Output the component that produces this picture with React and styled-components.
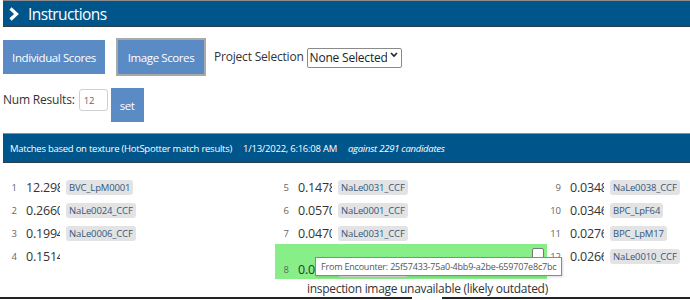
import React from "react";
import styled, { createGlobalStyle } from "styled-components";

const GlobalStyle = createGlobalStyle`
  html, body { margin: 0; padding: 0; background: #fff; overflow: hidden; }
  body { font-family: "Open Sans", "Noto Sans", sans-serif; color: #333; }
  * { box-sizing: border-box; }
`;

const Page = styled.div`
  width: 830px;
  padding: 0 0 0 3px;
  position: relative;
`;

const Bar = styled.div`
  display: flex;
  align-items: center;
  background: #00558a;
  border-top: 1px solid #8c8c8c;
  border-bottom: 1px solid #2a3d4d;
  color: #fff;
  margin-top: ${(p) => p.$top || 0}px;
  height: ${(p) => p.$h}px;
  padding-left: ${(p) => p.$pl}px;
  gap: ${(p) => p.$gap || 0}px;
`;

const Title = styled.span`
  font-size: 15.5px;
  letter-spacing: -0.6px;
`;

const Toolbar = styled.div`
  display: flex;
  align-items: center;
  height: 38px;
  margin-top: 11px;
`;

const Button = styled.button`
  font-family: inherit;
  font-size: 11.5px;
  letter-spacing: -0.4px;
  color: #fff;
  background: #5b8bc5;
  border: ${(p) => (p.$active ? "2px solid #a9a9a9" : "none")};
  height: ${(p) => (p.$active ? 38 : 34)}px;
  width: ${(p) => p.$w}px;
  padding: 0;
  margin-right: ${(p) => p.$mr || 0}px;
  cursor: pointer;
`;

const Label = styled.span`
  font-size: 12px;
  letter-spacing: -0.2px;
  color: #333;
  margin-right: ${(p) => p.$mr || 0}px;
  margin-top: ${(p) => p.$mt || 0}px;
  line-height: 20px;
`;

const SelectWrap = styled.div`
  position: relative;
  margin-top: -4px;
  height: 20px;
`;

const Select = styled.select`
  appearance: none;
  -webkit-appearance: none;
  font-family: inherit;
  font-size: 12px;
  letter-spacing: -0.2px;
  color: #222;
  height: 20px;
  width: 95px;
  padding: 0 14px 0 2px;
  border: 1px solid #8a8a8a;
  border-radius: 2px;
  background: #fff;
  outline: none;
`;

const Arrow = styled.svg`
  position: absolute;
  right: 4px;
  top: 7px;
  pointer-events: none;
`;

const NumRow = styled.div`
  display: flex;
  align-items: flex-start;
  height: 34px;
  margin-top: 12px;
`;

const NumInput = styled.input`
  font-family: inherit;
  font-size: 9.5px;
  color: #666;
  width: 29px;
  height: 22px;
  margin: 1px 3px 0 4px;
  padding: 0 4px;
  border: 1px solid #d0d0d0;
  border-radius: 3px;
  outline: none;
`;

const Grid = styled.div`
  display: grid;
  grid-template-columns: repeat(3, 272px);
  margin-top: 13px;
`;

const Column = styled.div`
  display: flex;
  flex-direction: column;
`;

const Cell = styled.div`
  position: relative;
  display: flex;
  align-items: ${(p) => (p.$sel ? "flex-end" : "center")};
  height: ${(p) => (p.$sel ? 35 : 23)}px;
  margin-top: ${(p) => (p.$sel ? -1 : 0)}px;
  background: ${(p) => (p.$sel ? "#88ee88" : "transparent")};
  padding-bottom: ${(p) => (p.$sel ? 1 : 0)}px;
`;

const Inner = styled.div`
  display: flex;
  align-items: center;
  height: 18px;
`;

const Rank = styled.span`
  width: 14px;
  text-align: right;
  font-size: 9.5px;
  color: #666;
`;

const Score = styled.span`
  width: 34px;
  margin-left: 9px;
  overflow: hidden;
  white-space: nowrap;
  font-size: 12.5px;
  letter-spacing: -0.2px;
  color: #333;
`;

const Tag = styled.span`
  margin-left: 6px;
  background: #e3e3e3;
  border-radius: 3px;
  padding: 0 3px;
  font-size: 9.5px;
  letter-spacing: -0.15px;
  line-height: 15px;
  color: #33577e;
`;

const Check = styled.span`
  position: absolute;
  top: 4px;
  right: 3px;
  width: 12px;
  height: 12px;
  background: #fff;
  border: 1px solid #777;
  border-radius: 2px;
`;

const Note = styled.div`
  margin: 2px 0 0 32px;
  font-size: 12px;
  letter-spacing: -0.3px;
  line-height: 16px;
  height: 16px;
  color: #333;
  white-space: nowrap;
`;

const Tooltip = styled.div`
  position: absolute;
  left: 315px;
  top: 257px;
  height: 19px;
  padding: 0 5px;
  display: flex;
  align-items: center;
  background: #fff;
  border: 1px solid #8a8a8a;
  font-size: 9px;
  letter-spacing: -0.2px;
  color: #555;
  white-space: nowrap;
  box-shadow: 1px 1px 2px rgba(0, 0, 0, 0.15);
`;

const Rule = styled.div`
  display: flex;
  gap: 30px;
  margin-left: -3px;
  width: 693px;
  height: 2px;
`;

const RuleSeg = styled.div`
  height: 2px;
  background: #222;
  width: ${(p) => (p.$w ? `${p.$w}px` : "auto")};
  flex: ${(p) => (p.$w ? "none" : "1")};
`;

const Italic = styled.span`
  font-style: italic;
`;

const Small = styled.span`
  font-size: 9.5px;
  letter-spacing: -0.25px;
`;

const cols = [
  [
    ["1", "12.2987", "BVC_LpM0001"],
    ["2", "0.2660", "NaLe0024_CCF"],
    ["3", "0.1994", "NaLe0006_CCF"],
    ["4", "0.1514", null],
  ],
  [
    ["5", "0.1478", "NaLe0031_CCF"],
    ["6", "0.0570", "NaLe0001_CCF"],
    ["7", "0.0470", "NaLe0031_CCF"],
    ["8", "0.0455", "NaLe0031_CCF", true],
  ],
  [
    ["9", "0.0348", "NaLe0038_CCF"],
    ["10", "0.0346", "BPC_LpF64"],
    ["11", "0.0276", "BPC_LpM17"],
    ["12", "0.0266", "NaLe0010_CCF"],
  ],
];

function Match({ rank, score, tag, sel }) {
  const content = (
    <>
      <Rank>{rank}</Rank>
      <Score>{score}</Score>
      {tag && <Tag>{tag}</Tag>}
    </>
  );
  if (sel) {
    return (
      <Cell $sel>
        <Check />
        <Inner>{content}</Inner>
      </Cell>
    );
  }
  return <Cell>{content}</Cell>;
}

export default function App() {
  return (
    <Page>
      <GlobalStyle />
      <Bar $h={27} $pl={5} $gap={8}>
        <svg width="12" height="14" viewBox="0 0 12 14">
          <polyline points="2.5,1.5 8.5,7 2.5,12.5" fill="none" stroke="#fff" strokeWidth="3.2" />
        </svg>
        <Title>Instructions</Title>
      </Bar>
      <Toolbar>
        <Button $w={102} $mr={11}>Individual Scores</Button>
        <Button $w={90} $active $mr={8}>Image Scores</Button>
        <Label $mr={3}>Project Selection</Label>
        <SelectWrap>
          <Select defaultValue="none">
            <option value="none">None Selected</option>
          </Select>
          <Arrow width="8" height="6" viewBox="0 0 8 6">
            <polyline points="1,1 4,4 7,1" fill="none" stroke="#222" strokeWidth="1.6" />
          </Arrow>
        </SelectWrap>
      </Toolbar>
      <NumRow>
        <Label $mt={2}>Num Results:</Label>
        <NumInput defaultValue="12" />
        <Button $w={33}>set</Button>
      </NumRow>
      <Bar $top={11} $h={30} $pl={7} $gap={11}>
        <Small>Matches based on texture (HotSpotter match results)</Small>
        <Small>1/13/2022, 6:16:08 AM</Small>
        <Small>
          <Italic>against 2291 candidates</Italic>
        </Small>
      </Bar>
      <Grid>
        {cols.map((col, i) => (
          <Column key={i}>
            {col.map(([rank, score, tag, sel]) => (
              <Match key={rank} rank={rank} score={score} tag={tag} sel={sel} />
            ))}
            {i === 1 && <Note>inspection image unavailable (likely outdated)</Note>}
          </Column>
        ))}
      </Grid>
      <Rule>
        <RuleSeg $w={412} />
        <RuleSeg />
      </Rule>
      <Tooltip>From Encounter: 25f57433-75a0-4bb9-a2be-659707e8c7bc</Tooltip>
    </Page>
  );
}
